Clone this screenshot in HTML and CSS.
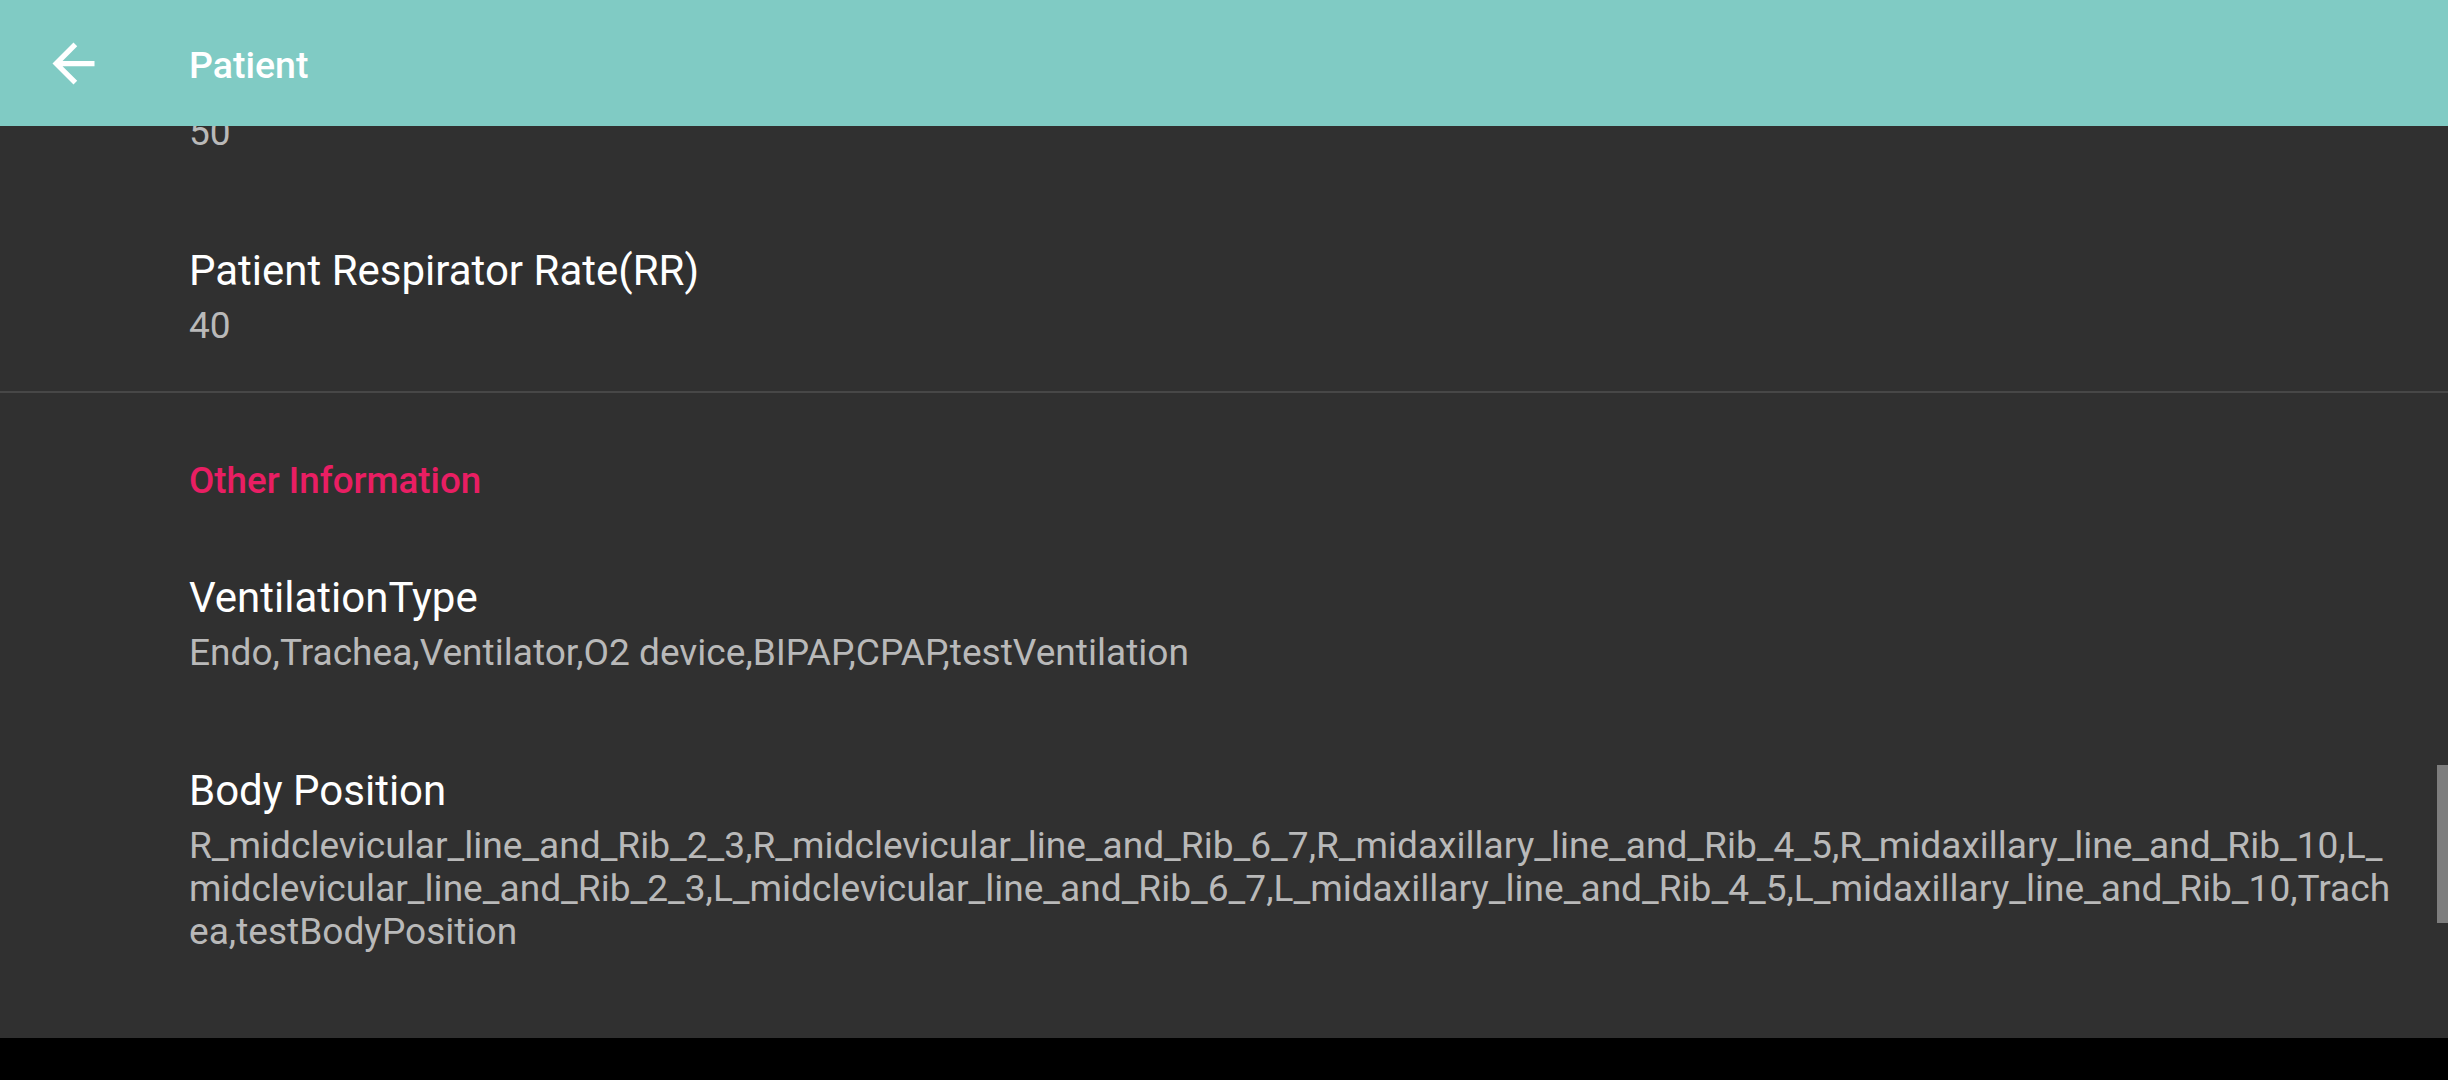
FILE: index.html
```html
<!DOCTYPE html>
<html lang="en">
<head>
<meta charset="utf-8">
<title>Patient</title>
<link rel="stylesheet" href="styles.css">
</head>
<body>
<div class="screen">
  <header class="toolbar">
    <button class="back" aria-label="Back">
      <svg viewBox="0 0 24 24" width="63" height="63"><path fill="#ffffff" d="M20 11H7.83l5.59-5.59L12 4l-8 8 8 8 1.41-1.41L7.83 13H20v-2z"/></svg>
    </button>
    <div class="title">Patient</div>
  </header>
  <main class="content">
    <div class="list">
      <div class="item item-clipped">
        <div class="value">50</div>
      </div>
      <div class="item">
        <div class="label">Patient Respirator Rate(RR)</div>
        <div class="value">40</div>
      </div>
      <div class="divider"></div>
      <div class="section-header">Other Information</div>
      <div class="item">
        <div class="label">VentilationType</div>
        <div class="value">Endo,Trachea,Ventilator,O2 device,BIPAP,CPAP,testVentilation</div>
      </div>
      <div class="item">
        <div class="label">Body Position</div>
        <div class="value">R_midclevicular_line_and_Rib_2_3,R_midclevicular_line_and_Rib_6_7,R_midaxillary_line_and_Rib_4_5,R_midaxillary_line_and_Rib_10,L_<br>midclevicular_line_and_Rib_2_3,L_midclevicular_line_and_Rib_6_7,L_midaxillary_line_and_Rib_4_5,L_midaxillary_line_and_Rib_10,Trach<br>ea,testBodyPosition</div>
      </div>
    </div>
    <div class="scrollbar"></div>
  </main>
  <footer class="navbar"></footer>
</div>
</body>
</html>
```

FILE: styles.css
```css
* { box-sizing: border-box; }
html, body {
  margin: 0;
  padding: 0;
  width: 2448px;
  height: 1080px;
  overflow: hidden;
  background: #000;
  font-family: Roboto, "Noto Sans", "Liberation Sans", sans-serif;
}
.screen {
  display: flex;
  flex-direction: column;
  width: 2448px;
  height: 1080px;
}
.toolbar {
  flex: 0 0 126px;
  height: 126px;
  background: #80cbc4;
  display: flex;
  align-items: center;
  padding-left: 42px;
  position: relative;
  z-index: 2;
}
.back {
  width: 63px;
  height: 63px;
  padding: 0;
  margin: 0;
  border: 0;
  background: transparent;
  display: flex;
}
.title {
  margin-left: 84px;
  color: #ffffff;
  font-size: 37.5px;
  font-weight: 500;
  line-height: 44px;
  margin-top: 3px;
}
.content {
  flex: 0 0 912px;
  height: 912px;
  background: #303030;
  overflow: hidden;
  position: relative;
}
.list {
  display: flex;
  flex-direction: column;
}
.item {
  padding: 48px 40px 44px 189px;
}
.item-clipped {
  padding-top: 0;
  margin-top: -15px;
}
.label {
  color: #ffffff;
  font-size: 42px;
  line-height: 50px;
  white-space: nowrap;
}
.value {
  color: #b9b9b9;
  font-size: 37.1px;
  line-height: 43px;
  margin-top: 8px;
  white-space: nowrap;
}
.item-clipped .value { margin-top: 0; }
.divider {
  height: 2px;
  background: #474747;
}
.section-header {
  color: #e91e63;
  font-size: 36.75px;
  font-weight: 500;
  line-height: 43px;
  padding: 66px 0 23px 189px;
}
.scrollbar {
  position: absolute;
  right: 0;
  top: 639px;
  width: 11px;
  height: 158px;
  background: #7d7d7d;
}
.navbar {
  flex: 1 1 auto;
  background: #000;
}
```
